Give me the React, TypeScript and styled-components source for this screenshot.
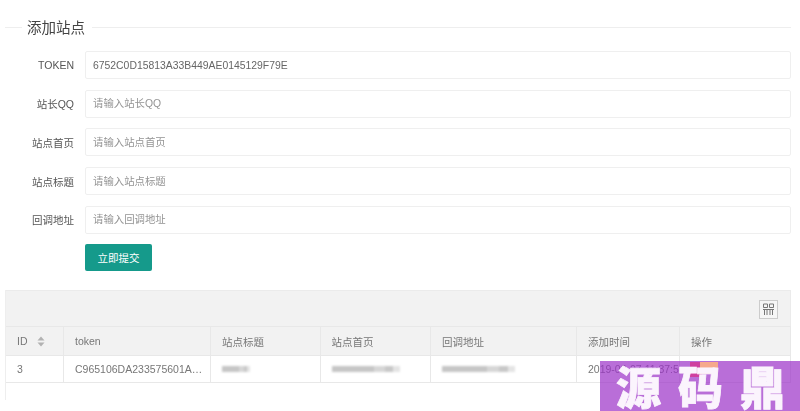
import React from "react";
import styled, { createGlobalStyle } from "styled-components";

const Global = createGlobalStyle`
  html, body { margin: 0; padding: 0; background: #fff; }
  body { font-family: "Liberation Sans", "Noto Sans CJK SC", sans-serif; color: #666; font-size: 10.5px; overflow: hidden; }
`;

const Viewport = styled.div`
  position: relative;
  width: 800px;
  height: 411px;
  overflow: hidden;
`;

const Page = styled.div`
  width: 786px;
  padding: 18px 9px 0 5px;
  filter: blur(0.45px);
`;

const Legend = styled.div`
  display: flex;
  align-items: center;
  height: 19px;
  margin-bottom: 14px;
  font-size: 14.5px;
  color: #444;
  &::before { content: ""; width: 17px; height: 1px; background: #eee; margin-right: 5px; }
  &::after { content: ""; flex: 1; height: 1px; background: #eee; margin-left: 7px; }
`;

const LegendText = styled.span`
  margin-top: -2px;
`;

const Form = styled.form`
  display: flex;
  flex-direction: column;
  gap: 10.7px;
  margin: 0;
`;

const Row = styled.div`
  display: flex;
  align-items: center;
`;

const Label = styled.label`
  width: 80px;
  padding-right: 11px;
  box-sizing: border-box;
  text-align: right;
  font-size: 10.5px;
  color: #555;
`;

const Input = styled.input`
  flex: 1;
  height: 28px;
  box-sizing: border-box;
  padding: 0 7px;
  border: 1px solid #efefef;
  border-radius: 2px;
  background: #fff;
  font: 10.4px "Liberation Sans", "Noto Sans CJK SC", sans-serif;
  color: #666;
  outline: none;
  &::placeholder { color: #949494; opacity: 1; }
`;

const Submit = styled.button`
  align-self: flex-start;
  margin: 0 0 0 80px;
  width: 67px;
  height: 27px;
  border: 0;
  border-radius: 2px;
  background: #159a8b;
  color: #fff;
  font: 10.5px "Liberation Sans", "Noto Sans CJK SC", sans-serif;
`;

const Table = styled.div`
  margin-top: 19px;
  border-left: 1px solid #eee;
  height: 110px;
`;

const Toolbar = styled.div`
  height: 36px;
  box-sizing: border-box;
  background: #f2f2f2;
  border-top: 1px solid #ebebeb;
  border-right: 1px solid #ebebeb;
  display: flex;
  align-items: center;
  justify-content: flex-end;
  padding-right: 12px;
`;

const ToolButton = styled.div`
  width: 19px;
  height: 19px;
  box-sizing: border-box;
  border: 1px solid #ccc;
  background: #f6f6f6;
  display: flex;
  align-items: center;
  justify-content: center;
  margin-top: 1px;
`;

const Grid = styled.div`
  display: grid;
  grid-template-columns: 58px 147px 109.5px 110.5px 146px 103px 111px;
`;

const Cell = styled.div<{ $head?: boolean }>`
  height: ${(p) => (p.$head ? "29px" : "28px")};
  box-sizing: border-box;
  padding-left: 11px;
  display: flex;
  align-items: center;
  gap: 9px;
  white-space: nowrap;
  overflow: hidden;
  font-size: 10.5px;
  color: #777;
  background: ${(p) => (p.$head ? "#f2f2f2" : "#fff")};
  border-top: 1px solid #e8e8e8;
  border-right: 1px solid #e8e8e8;
  border-bottom: ${(p) => (p.$head ? "0" : "1px solid #e8e8e8")};
`;

const Ellipsis = styled.span`
  max-width: 128px;
  overflow: hidden;
  text-overflow: ellipsis;
`;

const Smudge = styled.span<{ $w: number }>`
  display: block;
  width: ${(p) => p.$w}px;
  height: 6px;
  background: linear-gradient(90deg, #c6c6c6 0 62%, #d6d6d6 62% 78%, #c8c8c8 78% 90%, #e4e4e4 90%);
  filter: blur(1.2px);
`;

const Watermark = styled.div`
  position: absolute;
  right: 0;
  bottom: 0;
  width: 200px;
  height: 50px;
  box-sizing: border-box;
  padding-left: 16px;
  display: flex;
  gap: 17px;
  align-items: center;
  background: rgba(155, 49, 199, 0.7);
  color: #fbf4fd;
  font: 900 45px/50px "Noto Sans CJK SC", sans-serif;
  -webkit-text-stroke: 0.8px #fbf4fd;
`;

const Glyph = styled.span`
  position: relative;
  z-index: 1;
`;

const IconMagenta = styled.i`
  position: absolute;
  left: 90px;
  top: 1px;
  width: 12px;
  height: 15px;
  background: #cf3f9f;
`;

const IconPeach = styled.i`
  position: absolute;
  left: 100px;
  top: 1px;
  width: 18px;
  height: 12px;
  background: #f6a98c;
`;

const SortIcon = () => (
  <svg width="8" height="11" viewBox="0 0 8 11">
    <path d="M4 0.5 L7.5 4.5 H0.5 Z M4 10.5 L0.5 6.5 H7.5 Z" fill="#b2b2b2" />
  </svg>
);

const ColsIcon = () => (
  <svg width="11" height="13" viewBox="0 0 11 13" fill="none" stroke="#777" strokeWidth="1">
    <path d="M0.5 1 H4.5 V4.5 H0.5 Z M6.5 1 H10.5 V4.5 H6.5 Z" />
    <path d="M0 6.5 H11 M1.5 7 V12 M4 7 V12 M7 7 V12 M9.5 7 V12" />
  </svg>
);

const fields = [
  { label: "站长QQ", placeholder: "请输入站长QQ" },
  { label: "站点首页", placeholder: "请输入站点首页" },
  { label: "站点标题", placeholder: "请输入站点标题" },
  { label: "回调地址", placeholder: "请输入回调地址" },
];

const heads = ["token", "站点标题", "站点首页", "回调地址", "添加时间", "操作"];

export default function App() {
  return (
    <Viewport>
      <Global />
      <Page>
        <Legend>
          <LegendText>添加站点</LegendText>
        </Legend>
        <Form>
          <Row>
            <Label>TOKEN</Label>
            <Input readOnly value="6752C0D15813A33B449AE0145129F79E" />
          </Row>
          {fields.map((f) => (
            <Row key={f.label}>
              <Label>{f.label}</Label>
              <Input placeholder={f.placeholder} />
            </Row>
          ))}
          <Submit type="button">立即提交</Submit>
        </Form>
        <Table>
          <Toolbar>
            <ToolButton>
              <ColsIcon />
            </ToolButton>
          </Toolbar>
          <Grid>
            <Cell $head>
              ID <SortIcon />
            </Cell>
            {heads.map((h) => (
              <Cell $head key={h}>
                {h}
              </Cell>
            ))}
            <Cell>3</Cell>
            <Cell>
              <Ellipsis>C965106DA233575601AB2F</Ellipsis>
            </Cell>
            <Cell>
              <Smudge $w={28} />
            </Cell>
            <Cell>
              <Smudge $w={68} />
            </Cell>
            <Cell>
              <Smudge $w={73} />
            </Cell>
            <Cell>2019-03-07 11:37:5</Cell>
            <Cell />
          </Grid>
        </Table>
      </Page>
      <Watermark>
        <IconMagenta />
        <IconPeach />
        <Glyph>源</Glyph>
        <Glyph>码</Glyph>
        <Glyph>鼎</Glyph>
      </Watermark>
    </Viewport>
  );
}
